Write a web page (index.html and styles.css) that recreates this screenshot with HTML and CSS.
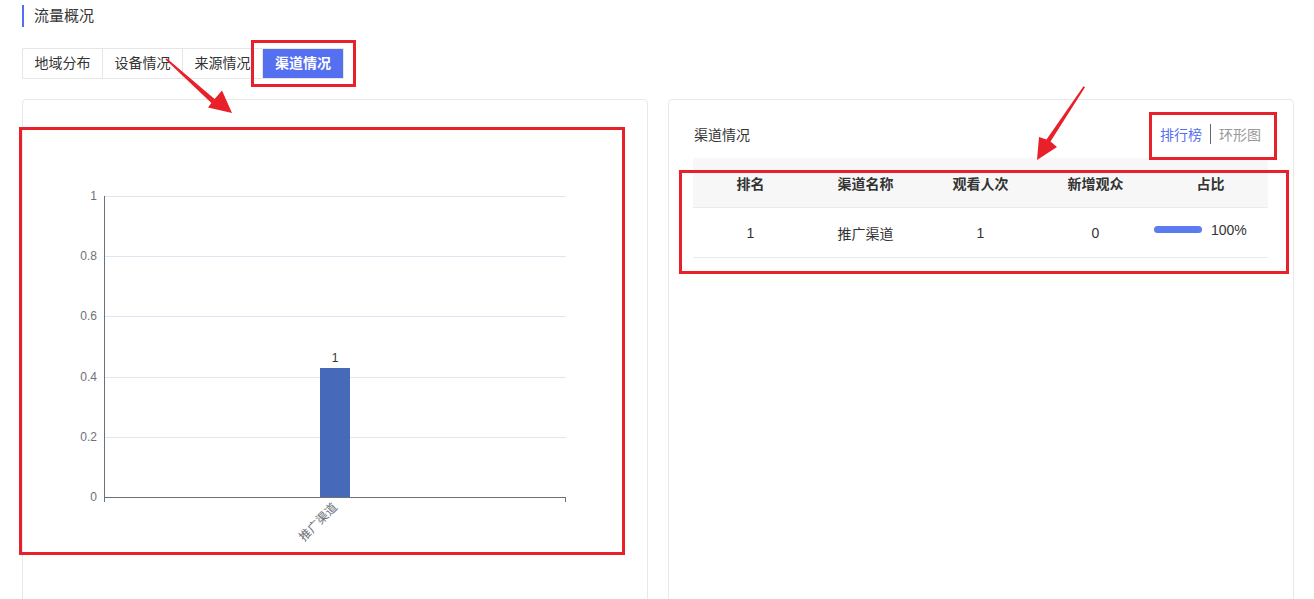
FILE: index.html
```html
<!DOCTYPE html>
<html lang="zh">
<head>
<meta charset="utf-8">
<title>流量概况</title>
<link rel="stylesheet" href="styles.css">
</head>
<body>
<div class="page">
  <div class="title">流量概况</div>
  <div class="tabs">
    <div class="tab">地域分布</div>
    <div class="tab">设备情况</div>
    <div class="tab">来源情况</div>
    <div class="tab active">渠道情况</div>
  </div>
  <div class="cards">
    <div class="card">
      <svg class="chart" width="624" height="480" viewBox="23 100 624 480">
        <g class="grid">
          <line x1="104" y1="196.5" x2="566" y2="196.5"/>
          <line x1="104" y1="256.5" x2="566" y2="256.5"/>
          <line x1="104" y1="316.5" x2="566" y2="316.5"/>
          <line x1="104" y1="377.5" x2="566" y2="377.5"/>
          <line x1="104" y1="437.5" x2="566" y2="437.5"/>
        </g>
        <rect class="bar" x="320" y="368" width="30" height="129"/>
        <g class="axis">
          <line x1="104.5" y1="196" x2="104.5" y2="497"/>
          <line x1="104" y1="497.5" x2="566" y2="497.5"/>
          <line x1="104.5" y1="497" x2="104.5" y2="502"/>
          <line x1="565.5" y1="497" x2="565.5" y2="502"/>
        </g>
        <g class="ylabels">
          <text x="97" y="200">1</text>
          <text x="97" y="260">0.8</text>
          <text x="97" y="320">0.6</text>
          <text x="97" y="381">0.4</text>
          <text x="97" y="441">0.2</text>
          <text x="97" y="501">0</text>
        </g>
        <text class="barlabel" x="335" y="362">1</text>
        <text class="xlabel" x="338" y="508" transform="rotate(-45 338 508)">推广渠道</text>
      </svg>
    </div>
    <div class="card">
      <div class="card-head">
        <div class="card-title">渠道情况</div>
        <div class="toggle">
          <span class="toggle-item on">排行榜</span>
          <span class="sep"></span>
          <span class="toggle-item">环形图</span>
        </div>
      </div>
      <div class="table">
        <div class="row head">
          <div class="cell">排名</div>
          <div class="cell">渠道名称</div>
          <div class="cell">观看人次</div>
          <div class="cell">新增观众</div>
          <div class="cell">占比</div>
        </div>
        <div class="row">
          <div class="cell">1</div>
          <div class="cell">推广渠道</div>
          <div class="cell">1</div>
          <div class="cell">0</div>
          <div class="cell ratio"><span class="progress"></span><span>100%</span></div>
        </div>
      </div>
    </div>
  </div>
</div>
<svg class="marks" width="1314" height="599" viewBox="0 0 1314 599">
  <rect x="252.5" y="41.5" width="102" height="44"/>
  <rect x="20.5" y="128.5" width="603" height="425"/>
  <rect x="1150.5" y="113.5" width="125" height="45"/>
  <rect x="680.5" y="171.5" width="607" height="101"/>
  <polygon class="arrow" points="165.5,59.6 166.6,58.3 214.6,99.1 222,90.5 232,113 208,107.5 211.4,102.9"/>
  <polygon class="arrow" points="1083.5,86.2 1085,87.2 1050.5,141.5 1057,147 1037,160 1039,137 1046.5,139.5"/>
</svg>
</body>
</html>
```
FILE: styles.css
```css
html, body {
  margin: 0;
  padding: 0;
  overflow: hidden;
  background: #ffffff;
}
body {
  font-family: "Liberation Sans", "Noto Sans CJK SC", sans-serif;
  color: #333333;
  font-size: 14px;
  position: relative;
  width: 1314px;
  height: 599px;
}
.page {
  padding: 5px 20px 0 22px;
}
.title {
  height: 22px;
  line-height: 22px;
  border-left: 2px solid #5470f0;
  padding-left: 10px;
  font-size: 15px;
  color: #333;
}
.tabs {
  display: flex;
  margin-top: 21px;
}
.tab {
  width: 79px;
  height: 29px;
  line-height: 29px;
  text-align: center;
  font-size: 14px;
  border: 1px solid #e6e6e6;
  border-right: none;
  color: #333;
}
.tab:first-child {
  border-radius: 2px 0 0 2px;
}
.tab.active {
  background: #5470f0;
  color: #ffffff;
  font-weight: 700;
  width: 80px;
  border-right: 1px solid #e6e6e6;
}
.cards {
  display: grid;
  grid-template-columns: 626px 626px;
  column-gap: 20px;
  margin-top: 20px;
}
.card {
  height: 520px;
  border: 1px solid #e8e8e8;
  border-radius: 4px;
  box-sizing: border-box;
}
.chart {
  display: block;
  font-family: "Liberation Sans", "Noto Sans CJK SC", sans-serif;
}
.grid line {
  stroke: #e0e6f1;
  stroke-width: 1;
}
.axis line {
  stroke: #6e7079;
  stroke-width: 1;
}
.bar {
  fill: #4669b9;
}
.ylabels text {
  font-size: 12px;
  fill: #6e7079;
  text-anchor: end;
}
.barlabel {
  font-size: 12px;
  fill: #333;
  text-anchor: middle;
}
.xlabel {
  font-size: 12px;
  fill: #6e7079;
  text-anchor: end;
  font-family: "Noto Sans CJK SC", sans-serif;
}
.card-head {
  display: flex;
  justify-content: space-between;
  align-items: center;
  height: 22px;
  margin-top: 23px;
  padding: 0 32px 0 25px;
}
.card-title {
  font-size: 14px;
  color: #333;
}
.toggle {
  display: flex;
  align-items: center;
  gap: 8px;
  font-size: 14px;
}
.toggle-item {
  color: #999999;
}
.toggle-item.on {
  color: #5470f0;
}
.sep {
  width: 1px;
  height: 20px;
  background: #666;
}
.table {
  margin: 13px 25px 0 24px;
}
.row {
  display: grid;
  grid-template-columns: repeat(5, 115px);
  height: 49px;
  border-bottom: 1px solid #ebebeb;
  align-items: center;
}
.row.head {
  background: #f7f7f7;
  font-weight: 700;
}
.cell {
  text-align: center;
  font-size: 14px;
  color: #333;
}
.ratio {
  display: flex;
  align-items: center;
  gap: 9px;
  padding-left: 1px;
  margin-bottom: 6px;
}
.progress {
  display: block;
  width: 48px;
  height: 7px;
  border-radius: 4px;
  background: #5b7bf1;
}
.marks {
  position: absolute;
  left: 0;
  top: 0;
  pointer-events: none;
}
.marks rect {
  fill: none;
  stroke: #e8202a;
  stroke-width: 3;
}
.marks .arrow {
  fill: #e8202a;
  stroke: none;
}
```
